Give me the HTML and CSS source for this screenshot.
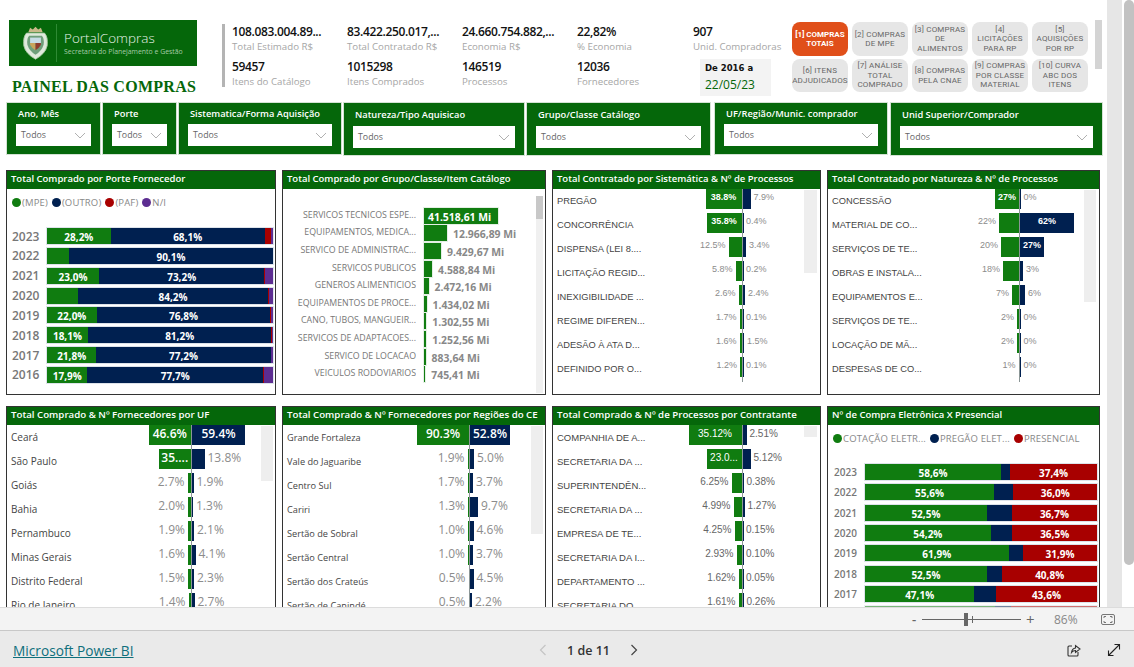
FILE: index.html
```html
<!DOCTYPE html>
<html lang="pt-BR">
<head>
<meta charset="utf-8">
<title>Painel das Compras</title>
<link rel="stylesheet" href="styles.css">
</head>
<body>
<div class="app">
<main class="main">
<div class="canvas">
  <header class="top">
    <div class="brand">
      <div class="logo">
        <svg class="crest" viewBox="0 0 30 38" width="27" height="36" aria-hidden="true">
          <path d="M7 7 L9 2 L12 4 L15 1 L18 4 L21 2 L23 7 Z" fill="#c9b98a"/>
          <path d="M5 8 H25 Q29 12 28 22 Q26 31 15 37 Q4 31 2 22 Q1 12 5 8 Z" fill="#dfe9dc" stroke="#a9c9a4"/>
          <path d="M8 11 H22 Q25 14 24 21 Q22 28 15 32 Q8 28 6 21 Q5 14 8 11 Z" fill="#6f9f7b"/>
          <rect x="9" y="13" width="12" height="6" fill="#c7dce6"/>
          <path d="M9 19 H15 V27 Q11 25 9 21 Z" fill="#c9a45c"/>
          <path d="M15 19 H21 V21 Q19 25 15 27 Z" fill="#8f3b2e"/>
        </svg>
        <div class="logo-text">
          <div class="logo-name">PortalCompras</div>
          <div class="logo-sub">Secretaria do Planejamento e Gestão</div>
        </div>
      </div>
      <h1 class="title">PAINEL DAS COMPRAS</h1>
    </div>
    <div class="kpis">
      <div class="kpi"><b>108.083.004.89...</b><span>Total Estimado R$</span></div>
      <div class="kpi"><b>83.422.250.017,...</b><span>Total Contratado R$</span></div>
      <div class="kpi"><b>24.660.754.882,...</b><span>Economia R$</span></div>
      <div class="kpi"><b>22,82%</b><span>% Economia</span></div>
      <div class="kpi"><b>907</b><span>Unid. Compradoras</span></div>
      <div class="kpi"><b>59457</b><span>Itens do Catálogo</span></div>
      <div class="kpi"><b>1015298</b><span>Itens Comprados</span></div>
      <div class="kpi"><b>146519</b><span>Processos</span></div>
      <div class="kpi"><b>12036</b><span>Fornecedores</span></div>
      <div class="date"><div class="date-a">De 2016 a</div><div class="date-b">22/05/23</div></div>
    </div>
    <nav class="btns">
      <a class="btn on">[1] COMPRAS TOTAIS</a>
      <a class="btn">[2] COMPRAS DE MPE</a>
      <a class="btn">[3] COMPRAS DE ALIMENTOS</a>
      <a class="btn">[4] LICITAÇÕES PARA RP</a>
      <a class="btn">[5] AQUISIÇÕES POR RP</a>
      <a class="btn">[6] ITENS ADJUDICADOS</a>
      <a class="btn">[7] ANÁLISE TOTAL COMPRADO</a>
      <a class="btn">[8] COMPRAS PELA CNAE</a>
      <a class="btn">[9] COMPRAS POR CLASSE MATERIAL</a>
      <a class="btn">[10] CURVA ABC DOS ITENS</a>
    </nav>
    <div class="btn-scroll"></div>
  </header>

  <section class="filters">
    <div class="slicer s-ano"><div class="s-label">Ano, Mês</div><div class="dd">Todos<svg class="chev" viewBox="0 0 12 7"><path d="M1 1 L6 6 L11 1"/></svg></div></div>
    <div class="slicer s-porte"><div class="s-label">Porte</div><div class="dd">Todos<svg class="chev" viewBox="0 0 12 7"><path d="M1 1 L6 6 L11 1"/></svg></div></div>
    <div class="slicer s-sis"><div class="s-label">Sistematica/Forma Aquisição</div><div class="dd">Todos<svg class="chev" viewBox="0 0 12 7"><path d="M1 1 L6 6 L11 1"/></svg></div></div>
    <div class="slicer tall s-nat"><div class="s-label">Natureza/Tipo Aquisicao</div><div class="dd">Todos<svg class="chev" viewBox="0 0 12 7"><path d="M1 1 L6 6 L11 1"/></svg></div></div>
    <div class="slicer tall s-gru"><div class="s-label">Grupo/Classe Catálogo</div><div class="dd">Todos<svg class="chev" viewBox="0 0 12 7"><path d="M1 1 L6 6 L11 1"/></svg></div></div>
    <div class="slicer s-uf"><div class="s-label">UF/Região/Munic. comprador</div><div class="dd">Todos<svg class="chev" viewBox="0 0 12 7"><path d="M1 1 L6 6 L11 1"/></svg></div></div>
    <div class="slicer tall s-uni"><div class="s-label">Unid Superior/Comprador</div><div class="dd">Todos<svg class="chev" viewBox="0 0 12 7"><path d="M1 1 L6 6 L11 1"/></svg></div></div>
  </section>

  <section class="grid">
    <!-- Row 1 -->
    <article class="panel">
      <h2 class="p-head">Total Comprado por Porte Fornecedor</h2>
      <div class="legend"><i class="dot g"></i>(MPE) <i class="dot n"></i>(OUTRO) <i class="dot r"></i>(PAF) <i class="dot p"></i>N/I</div>
      <div class="stack big">
        <div class="srow"><span class="yr">2023</span><div class="sbar"><div class="g" style="width:28.2%">28,2%</div><div class="n" style="width:68.1%">68,1%</div><div class="r" style="width:2.9%"></div><div class="p" style="width:.8%"></div></div></div>
        <div class="srow"><span class="yr">2022</span><div class="sbar"><div class="g" style="width:9.7%"></div><div class="n" style="width:90.3%">90,1%</div></div></div>
        <div class="srow"><span class="yr">2021</span><div class="sbar"><div class="g" style="width:23%">23,0%</div><div class="n" style="width:73.2%">73,2%</div><div class="r" style="width:.3%"></div><div class="p" style="width:3.5%"></div></div></div>
        <div class="srow"><span class="yr">2020</span><div class="sbar"><div class="g" style="width:13.7%"></div><div class="n" style="width:84.2%">84,2%</div><div class="r" style="width:.4%"></div><div class="p" style="width:1.7%"></div></div></div>
        <div class="srow"><span class="yr">2019</span><div class="sbar"><div class="g" style="width:22%">22,0%</div><div class="n" style="width:76.8%">76,8%</div><div class="r" style="width:.3%"></div><div class="p" style="width:.9%"></div></div></div>
        <div class="srow"><span class="yr">2018</span><div class="sbar"><div class="g" style="width:18.1%">18,1%</div><div class="n" style="width:81.2%">81,2%</div><div class="r" style="width:.4%"></div><div class="p" style="width:.3%"></div></div></div>
        <div class="srow"><span class="yr">2017</span><div class="sbar"><div class="g" style="width:21.8%">21,8%</div><div class="n" style="width:77.2%">77,2%</div><div class="r" style="width:.3%"></div><div class="p" style="width:.7%"></div></div></div>
        <div class="srow"><span class="yr">2016</span><div class="sbar"><div class="g" style="width:17.9%">17,9%</div><div class="n" style="width:77.7%">77,7%</div><div class="r" style="width:.4%"></div><div class="p" style="width:4%"></div></div></div>
      </div>
    </article>

    <article class="panel">
      <h2 class="p-head">Total Comprado por Grupo/Classe/Item Catálogo</h2>
      <div class="hbars">
        <div class="hrow"><span class="hl">SERVICOS TECNICOS ESPE...</span><span class="hb in" style="width:74px">41.518,61 Mi</span></div>
        <div class="hrow"><span class="hl">EQUIPAMENTOS, MEDICA...</span><span class="hb" style="width:23px"></span><span class="hv">12.966,89 Mi</span></div>
        <div class="hrow"><span class="hl">SERVICO DE ADMINISTRAC...</span><span class="hb" style="width:17px"></span><span class="hv">9.429,67 Mi</span></div>
        <div class="hrow"><span class="hl">SERVICOS PUBLICOS</span><span class="hb" style="width:8px"></span><span class="hv">4.588,84 Mi</span></div>
        <div class="hrow"><span class="hl">GENEROS ALIMENTICIOS</span><span class="hb" style="width:4.5px"></span><span class="hv">2.472,16 Mi</span></div>
        <div class="hrow"><span class="hl">EQUIPAMENTOS DE PROCE...</span><span class="hb" style="width:2.5px"></span><span class="hv">1.434,02 Mi</span></div>
        <div class="hrow"><span class="hl">CANO, TUBOS, MANGUEIR...</span><span class="hb" style="width:2.3px"></span><span class="hv">1.302,55 Mi</span></div>
        <div class="hrow"><span class="hl">SERVICOS DE ADAPTACOES...</span><span class="hb" style="width:2.2px"></span><span class="hv">1.252,56 Mi</span></div>
        <div class="hrow"><span class="hl">SERVICO DE LOCACAO</span><span class="hb" style="width:1.6px"></span><span class="hv">883,64 Mi</span></div>
        <div class="hrow"><span class="hl">VEICULOS RODOVIARIOS</span><span class="hb" style="width:1.3px"></span><span class="hv">745,41 Mi</span></div>
      </div>
      <div class="track t-gru"><div class="thumb"></div></div>
    </article>

    <article class="panel mirror m-sis arial">
      <h2 class="p-head">Total Contratado por Sistemática &amp; Nº de Processos</h2>
      <div class="mrow"><div class="ml"><span class="lb">PREGÃO</span><span class="b gb" style="width:36px">38.8%</span></div><div class="mr"><span class="b nb" style="width:8px"></span><span class="v">7.9%</span></div></div>
      <div class="mrow"><div class="ml"><span class="lb">CONCORRÊNCIA</span><span class="b gb" style="width:35px">35.8%</span></div><div class="mr"><span class="b nb" style="width:.5px"></span><span class="v">0.4%</span></div></div>
      <div class="mrow"><div class="ml"><span class="lb">DISPENSA (LEI 8....</span><span class="v">12.5%</span><span class="b gb" style="width:13px"></span></div><div class="mr"><span class="b nb" style="width:3.5px"></span><span class="v">3.4%</span></div></div>
      <div class="mrow"><div class="ml"><span class="lb">LICITAÇÃO REGID...</span><span class="v">5.8%</span><span class="b gb" style="width:6px"></span></div><div class="mr"><span class="b nb" style="width:.5px"></span><span class="v">0.2%</span></div></div>
      <div class="mrow"><div class="ml"><span class="lb">INEXIGIBILIDADE ...</span><span class="v">2.6%</span><span class="b gb" style="width:3px"></span></div><div class="mr"><span class="b nb" style="width:2.5px"></span><span class="v">2.4%</span></div></div>
      <div class="mrow"><div class="ml"><span class="lb">REGIME DIFEREN...</span><span class="v">1.7%</span><span class="b gb" style="width:2px"></span></div><div class="mr"><span class="b nb" style="width:.5px"></span><span class="v">0.1%</span></div></div>
      <div class="mrow"><div class="ml"><span class="lb">ADESÃO À ATA D...</span><span class="v">1.6%</span><span class="b gb" style="width:2px"></span></div><div class="mr"><span class="b nb" style="width:1.5px"></span><span class="v">1.5%</span></div></div>
      <div class="mrow"><div class="ml"><span class="lb">DEFINIDO POR O...</span><span class="v">1.2%</span><span class="b gb" style="width:1.5px"></span></div><div class="mr"><span class="b nb" style="width:.5px"></span><span class="v">0.1%</span></div></div>
      <div class="track t-sis"></div>
    </article>

    <article class="panel mirror m-nat arial">
      <h2 class="p-head">Total Contratado por Natureza &amp; Nº de Processos</h2>
      <div class="mrow"><div class="ml"><span class="lb">CONCESSÃO</span><span class="b gb" style="width:24px">27%</span></div><div class="mr"><span class="b nb" style="width:.5px"></span><span class="v">0%</span></div></div>
      <div class="mrow"><div class="ml"><span class="lb">MATERIAL DE CO...</span><span class="v">22%</span><span class="b gb" style="width:20px"></span></div><div class="mr"><span class="b nb" style="width:54px">62%</span></div></div>
      <div class="mrow"><div class="ml"><span class="lb">SERVIÇOS DE TE...</span><span class="v">20%</span><span class="b gb" style="width:18px"></span></div><div class="mr"><span class="b nb" style="width:24px">27%</span></div></div>
      <div class="mrow"><div class="ml"><span class="lb">OBRAS E INSTALA...</span><span class="v">18%</span><span class="b gb" style="width:16px"></span></div><div class="mr"><span class="b nb" style="width:3px"></span><span class="v">3%</span></div></div>
      <div class="mrow"><div class="ml"><span class="lb">EQUIPAMENTOS E...</span><span class="v">7%</span><span class="b gb" style="width:7px"></span></div><div class="mr"><span class="b nb" style="width:5px"></span><span class="v">6%</span></div></div>
      <div class="mrow"><div class="ml"><span class="lb">SERVIÇOS DE TE...</span><span class="v">2%</span><span class="b gb" style="width:2px"></span></div><div class="mr"><span class="b nb" style="width:.5px"></span><span class="v">0%</span></div></div>
      <div class="mrow"><div class="ml"><span class="lb">LOCAÇÃO DE MÃ...</span><span class="v">2%</span><span class="b gb" style="width:2px"></span></div><div class="mr"><span class="b nb" style="width:.5px"></span><span class="v">0%</span></div></div>
      <div class="mrow"><div class="ml"><span class="lb">DESPESAS DE CO...</span><span class="v">1%</span><span class="b gb" style="width:.5px"></span></div><div class="mr"><span class="b nb" style="width:.5px"></span><span class="v">0%</span></div></div>
      <div class="track t-nat"></div>
    </article>

    <!-- Row 2 -->
    <article class="panel mirror m-uf large">
      <h2 class="p-head">Total Comprado &amp; Nº Fornecedores por UF</h2>
      <div class="mrow"><div class="ml"><span class="lb">Ceará</span><span class="b gb" style="width:42.5px">46.6%</span></div><div class="mr"><span class="b nb" style="width:53px">59.4%</span></div></div>
      <div class="mrow"><div class="ml"><span class="lb">São Paulo</span><span class="b gb" style="width:32.5px">35....</span></div><div class="mr"><span class="b nb" style="width:12.5px"></span><span class="v">13.8%</span></div></div>
      <div class="mrow"><div class="ml"><span class="lb">Goiás</span><span class="v">2.7%</span><span class="b gb" style="width:3.5px"></span></div><div class="mr"><span class="b nb" style="width:1.5px"></span><span class="v">1.9%</span></div></div>
      <div class="mrow"><div class="ml"><span class="lb">Bahia</span><span class="v">2.0%</span><span class="b gb" style="width:3px"></span></div><div class="mr"><span class="b nb" style="width:1px"></span><span class="v">1.3%</span></div></div>
      <div class="mrow"><div class="ml"><span class="lb">Pernambuco</span><span class="v">1.9%</span><span class="b gb" style="width:3px"></span></div><div class="mr"><span class="b nb" style="width:2px"></span><span class="v">2.1%</span></div></div>
      <div class="mrow"><div class="ml"><span class="lb">Minas Gerais</span><span class="v">1.6%</span><span class="b gb" style="width:3px"></span></div><div class="mr"><span class="b nb" style="width:3.5px"></span><span class="v">4.1%</span></div></div>
      <div class="mrow"><div class="ml"><span class="lb">Distrito Federal</span><span class="v">1.5%</span><span class="b gb" style="width:3px"></span></div><div class="mr"><span class="b nb" style="width:2px"></span><span class="v">2.3%</span></div></div>
      <div class="mrow"><div class="ml"><span class="lb">Rio de Janeiro</span><span class="v">1.4%</span><span class="b gb" style="width:2.5px"></span></div><div class="mr"><span class="b nb" style="width:2.5px"></span><span class="v">2.7%</span></div></div>
      <div class="track t-uf"></div>
    </article>

    <article class="panel mirror m-reg large">
      <h2 class="p-head">Total Comprado &amp; Nº Fornecedores por Regiões do CE</h2>
      <div class="mrow"><div class="ml"><span class="lb">Grande Fortaleza</span><span class="b gb" style="width:52px">90.3%</span></div><div class="mr"><span class="b nb" style="width:40px">52.8%</span></div></div>
      <div class="mrow"><div class="ml"><span class="lb">Vale do Jaguaribe</span><span class="v">1.9%</span><span class="b gb" style="width:1.5px"></span></div><div class="mr"><span class="b nb" style="width:4px"></span><span class="v">5.0%</span></div></div>
      <div class="mrow"><div class="ml"><span class="lb">Centro Sul</span><span class="v">1.7%</span><span class="b gb" style="width:1.5px"></span></div><div class="mr"><span class="b nb" style="width:3px"></span><span class="v">3.7%</span></div></div>
      <div class="mrow"><div class="ml"><span class="lb">Cariri</span><span class="v">1.3%</span><span class="b gb" style="width:1px"></span></div><div class="mr"><span class="b nb" style="width:8px"></span><span class="v">9.7%</span></div></div>
      <div class="mrow"><div class="ml"><span class="lb">Sertão de Sobral</span><span class="v">1.0%</span><span class="b gb" style="width:1px"></span></div><div class="mr"><span class="b nb" style="width:3.5px"></span><span class="v">4.6%</span></div></div>
      <div class="mrow"><div class="ml"><span class="lb">Sertão Central</span><span class="v">1.0%</span><span class="b gb" style="width:1px"></span></div><div class="mr"><span class="b nb" style="width:3px"></span><span class="v">3.7%</span></div></div>
      <div class="mrow"><div class="ml"><span class="lb">Sertão dos Crateús</span><span class="v">0.5%</span><span class="b gb" style="width:.5px"></span></div><div class="mr"><span class="b nb" style="width:3.5px"></span><span class="v">4.5%</span></div></div>
      <div class="mrow"><div class="ml"><span class="lb">Sertão de Canindé</span><span class="v">0.5%</span><span class="b gb" style="width:.5px"></span></div><div class="mr"><span class="b nb" style="width:2px"></span><span class="v">2.2%</span></div></div>
      <div class="track t-reg"></div>
    </article>

    <article class="panel mirror m-con arial mid">
      <h2 class="p-head">Total Comprado &amp; Nº de Processos por Contratante</h2>
      <div class="mrow"><div class="ml"><span class="lb">COMPANHIA DE A...</span><span class="b gb" style="width:53px">35.12%</span></div><div class="mr"><span class="b nb" style="width:4px"></span><span class="v">2.51%</span></div></div>
      <div class="mrow"><div class="ml"><span class="lb">SECRETARIA DA ...</span><span class="b gb" style="width:35px">23.0...</span></div><div class="mr"><span class="b nb" style="width:8px"></span><span class="v">5.12%</span></div></div>
      <div class="mrow"><div class="ml"><span class="lb">SUPERINTENDÊN...</span><span class="v">6.25%</span><span class="b gb" style="width:10px"></span></div><div class="mr"><span class="b nb" style="width:1px"></span><span class="v">0.38%</span></div></div>
      <div class="mrow"><div class="ml"><span class="lb">SECRETARIA DA ...</span><span class="v">4.99%</span><span class="b gb" style="width:8px"></span></div><div class="mr"><span class="b nb" style="width:2px"></span><span class="v">1.27%</span></div></div>
      <div class="mrow"><div class="ml"><span class="lb">EMPRESA DE TE...</span><span class="v">4.25%</span><span class="b gb" style="width:7px"></span></div><div class="mr"><span class="b nb" style="width:.5px"></span><span class="v">0.15%</span></div></div>
      <div class="mrow"><div class="ml"><span class="lb">SECRETARIA DA I...</span><span class="v">2.93%</span><span class="b gb" style="width:5px"></span></div><div class="mr"><span class="b nb" style="width:.5px"></span><span class="v">0.10%</span></div></div>
      <div class="mrow"><div class="ml"><span class="lb">DEPARTAMENTO ...</span><span class="v">1.62%</span><span class="b gb" style="width:3px"></span></div><div class="mr"><span class="b nb" style="width:.5px"></span><span class="v">0.05%</span></div></div>
      <div class="mrow"><div class="ml"><span class="lb">SECRETARIA DO ...</span><span class="v">1.61%</span><span class="b gb" style="width:3px"></span></div><div class="mr"><span class="b nb" style="width:1px"></span><span class="v">0.26%</span></div></div>
      <div class="track t-con"></div>
    </article>

    <article class="panel">
      <h2 class="p-head">Nº de Compra Eletrônica X Presencial</h2>
      <div class="legend l2"><i class="dot g"></i>COTAÇÃO ELETR... <i class="dot n"></i>PREGÃO ELET... <i class="dot r"></i>PRESENCIAL</div>
      <div class="stack small">
        <div class="srow"><span class="yr">2023</span><div class="sbar"><div class="g" style="width:58.6%">58,6%</div><div class="n" style="width:4%"></div><div class="r" style="width:37.4%">37,4%</div></div></div>
        <div class="srow"><span class="yr">2022</span><div class="sbar"><div class="g" style="width:55.6%">55,6%</div><div class="n" style="width:8.4%"></div><div class="r" style="width:36%">36,0%</div></div></div>
        <div class="srow"><span class="yr">2021</span><div class="sbar"><div class="g" style="width:52.5%">52,5%</div><div class="n" style="width:10.8%"></div><div class="r" style="width:36.7%">36,7%</div></div></div>
        <div class="srow"><span class="yr">2020</span><div class="sbar"><div class="g" style="width:54.2%">54,2%</div><div class="n" style="width:9.3%"></div><div class="r" style="width:36.5%">36,5%</div></div></div>
        <div class="srow"><span class="yr">2019</span><div class="sbar"><div class="g" style="width:61.9%">61,9%</div><div class="n" style="width:6.2%"></div><div class="r" style="width:31.9%">31,9%</div></div></div>
        <div class="srow"><span class="yr">2018</span><div class="sbar"><div class="g" style="width:52.5%">52,5%</div><div class="n" style="width:6.7%"></div><div class="r" style="width:40.8%">40,8%</div></div></div>
        <div class="srow"><span class="yr">2017</span><div class="sbar"><div class="g" style="width:47.1%">47,1%</div><div class="n" style="width:9.3%"></div><div class="r" style="width:43.6%">43,6%</div></div></div>
        <div class="srow faded"><span class="yr">2016</span><div class="sbar"><div class="g" style="width:56%"></div><div class="n" style="width:7%"></div><div class="r" style="width:37%"></div></div></div>
      </div>
    </article>
  </section>
</div>
<aside class="rail"><div class="band"></div><div class="page-scroll"></div></aside>
</main>

<div class="zoombar">
  <span class="z-sign">-</span>
  <div class="slider"><span class="s-thumb"></span><span class="s-tick"></span></div>
  <span class="z-sign plus">+</span>
  <span class="z-pct">86%</span>
  <svg class="z-fit" viewBox="0 0 14 11" width="14" height="11"><rect x=".5" y=".5" width="13" height="10" rx="1.5" fill="none" stroke="#777"/><path d="M3 4 V2.5 H5 M9 2.5 H11 V4 M11 7 V8.5 H9 M5 8.5 H3 V7" fill="none" stroke="#777"/></svg>
</div>

<footer class="footer">
  <a class="pbi">Microsoft Power BI</a>
  <div class="pager">
    <svg class="pg" viewBox="0 0 8 12" width="8" height="12"><path d="M6.5 1 L1.5 6 L6.5 11" fill="none" stroke="#c4c4c4" stroke-width="1.2"/></svg>
    <span class="pg-text">1 de 11</span>
    <svg class="pg" viewBox="0 0 8 12" width="8" height="12"><path d="M1.5 1 L6.5 6 L1.5 11" fill="none" stroke="#444" stroke-width="1.2"/></svg>
  </div>
  <div class="actions">
    <svg viewBox="0 0 14 14" width="14" height="14"><path d="M5 3 H2 Q1 3 1 4 V12 Q1 13 2 13 H10 Q11 13 11 12 V9" fill="none" stroke="#333" stroke-width="1.1"/><path d="M4.5 9.5 Q5 5.5 8.5 5 V2.5 L13 6 L8.5 9.5 V7.5 Q6 7.5 4.5 9.5 Z" fill="none" stroke="#333" stroke-width="1.1"/></svg>
    <svg viewBox="0 0 14 14" width="14" height="14"><path d="M1.5 12.5 L12.5 1.5 M7.5 1.5 H12.5 V6.5 M1.5 7.5 V12.5 H6.5" fill="none" stroke="#222" stroke-width="1.1"/></svg>
  </div>
</footer>
</div>
</body>
</html>
```

FILE: styles.css
```css
* { box-sizing: border-box; }
html, body { margin: 0; padding: 0; height: 100%; overflow: hidden; background: #fff; }
body { font-family: "Open Sans", "Noto Sans", sans-serif; color: #333; }
h1, h2 { margin: 0; font-weight: inherit; }
.app { width: 1134px; height: 667px; display: flex; flex-direction: column; }
.main { height: 607px; display: flex; overflow: hidden; }
.canvas { width: 1107px; padding-top: 20px; flex: none; }

/* header */
.top { display: flex; height: 82px; position: relative; }
.brand { width: 188px; margin-left: 9px; flex: none; }
.logo { height: 46px; background: #05670a; display: flex; align-items: center; padding-left: 13px; }
.crest { flex: none; }
.logo-text { margin-left: 7px; border-left: 1px solid #2f8a34; padding-left: 7px; height: 38px; display: flex; flex-direction: column; justify-content: center; color: #fff; }
.logo-name { font-weight: 300; font-size: 13.5px; line-height: 18px; color: #e8f2e8; white-space: nowrap; }
.logo-sub { font-size: 6.9px; line-height: 10px; color: #a5cba7; white-space: nowrap; }
.title { margin: 13px 0 0 3px; font-family: "Liberation Serif", serif; font-weight: 700; font-size: 16px; line-height: 16px; color: #05670a; white-space: nowrap; letter-spacing: .27px; }

.kpis { margin: 4px 0 0 25px; height: 63px; width: 549px; border-left: 3px solid #b4b4b4; padding-left: 7px; display: grid; grid-template-columns: 115px 115px 115px 116px 1fr; grid-template-rows: 35px 28px; flex: none; }
.kpi { display: flex; flex-direction: column; }
.kpi b { font-size: 12px; line-height: 16px; font-weight: 600; color: #111; white-space: nowrap; letter-spacing: -.35px; }
.kpi span { font-size: 9.7px; line-height: 14px; color: #a6a6a6; white-space: nowrap; }
.date { margin: 0 0 0 7px; height: 37px; width: 71px; background: #f3f3f3; padding: 2px 0 0 5px; }
.date-a { font-family: "DejaVu Sans", sans-serif; font-size: 8.5px; font-weight: 700; line-height: 14px; color: #111; white-space: nowrap; }
.date-b { font-size: 12px; line-height: 19px; color: #05670a; white-space: nowrap; }

.btns { margin: 2px 0 0 21px; width: 296px; display: grid; grid-template-columns: repeat(5, 56px); grid-template-rows: 34px 33px; gap: 3px 4px; flex: none; }
.btn { background: #e6e6e6; border-radius: 8px; display: flex; align-items: center; justify-content: center; text-align: center; font-family: "Roboto", sans-serif; font-size: 8px; line-height: 9.5px; letter-spacing: .2px; color: #666; padding: 0 1px; }
.btn.on { background: #e04f1a; color: #fff; font-weight: 700; letter-spacing: 0; }
.btn-scroll { margin-left: 7px; width: 7px; height: 49px; background: #d4d4d4; flex: none; }

/* filters */
.filters { display: flex; margin: 0 0 0 6px; gap: 1px; height: 54px; align-items: flex-start; }
.slicer { background: #05670a; height: 53px; padding: 2px 9px 0; border: 1px solid #d4e2d4; flex: none; }
.slicer.tall { height: 54px; }
.s-label { color: #fff; font-size: 9.3px; font-weight: 600; line-height: 18px; margin-bottom: 1px; padding-left: 2px; white-space: nowrap; }
.tall .s-label { line-height: 20px; }
.dd { background: #fff; height: 22px; display: flex; align-items: center; justify-content: space-between; padding: 0 5px; font-size: 8.8px; color: #666; }
.chev { width: 12px; height: 7px; }
.chev path { fill: none; stroke: #b0b0b0; stroke-width: 1; }
.s-ano { width: 95px; }
.s-porte { width: 75px; }
.s-sis { width: 164px; }
.s-nat { width: 182px; }
.s-gru { width: 185px; }
.s-uf { width: 174px; margin-left: 2px; }
.s-uni { width: 213px; margin-left: 1px; }

/* grid */
.grid { margin: 14px 0 0 6px; display: grid; grid-template-columns: 270px 264px 269px 273px; grid-template-rows: 225px 240px; gap: 11px 6px; }
.panel { border: 1px solid #333; background: #fff; position: relative; overflow: hidden; }
.p-head { background: #05670a; color: #fff; height: 18px; font-size: 9.5px; font-weight: 600; line-height: 16px; padding-left: 4px; white-space: nowrap; }
.large .p-head, .mid .p-head { font-size: 9.7px; }

.legend { height: 25px; padding: 1px 0 0 5px; font-size: 9.5px; color: #888; display: flex; align-items: center; white-space: nowrap; letter-spacing: .15px; }
.legend.l2 { padding-left: 5px; height: 25px; }
.dot { width: 9px; height: 9px; border-radius: 50%; display: inline-block; margin: 0 1px 0 0; }
.legend .dot:not(:first-child) { margin-left: 4px; }
.dot.g, .sbar .g { background: #107c10; }
.dot.n, .sbar .n { background: #002050; }
.dot.r, .sbar .r { background: #a80000; }
.dot.p, .sbar .p { background: #5c2d91; }

.stack { display: flex; flex-direction: column; }
.stack.big { margin-top: 14px; gap: 3.85px; }
.stack.small { margin-top: 14px; gap: 4.35px; }
.srow { display: flex; align-items: center; height: 16px; }
.yr { color: #777; font-weight: 600; white-space: nowrap; }
.big .yr { width: 40px; padding-left: 5px; font-size: 12px; }
.small .yr { width: 37px; padding-left: 6px; font-size: 10px; }
.sbar { display: flex; height: 16px; width: 226px; box-shadow: 0 0 0 1px #dde3ea; }
.small .sbar { width: 232px; }
.sbar > div { height: 100%; color: #fff; font-size: 10px; font-weight: 700; line-height: 18px; text-align: center; white-space: nowrap; overflow: hidden; }
.faded { opacity: .55; }

/* horizontal bars */
.hbars { padding-top: 18px; }
.hrow { display: flex; align-items: center; height: 17.6px; }
.hl { width: 133px; text-align: right; font-size: 8.8px; color: #777; white-space: nowrap; flex: none; margin-top: -2px; overflow: hidden; }
.hb { height: 16px; background: #107c10; margin-left: 8px; flex: none; box-shadow: 0 0 0 1px #e4efe4; }
.hb.in { color: #fff; font-size: 10.4px; font-weight: 700; line-height: 19px; padding-left: 4px; white-space: nowrap; }
.hv { margin: 2px 0 0 6px; font-size: 10.4px; font-weight: 700; color: #888; white-space: nowrap; }

.track { position: absolute; background: #eee; }
.t-gru { left: 253px; top: 25px; width: 7px; height: 197px; background: #f0f0f0; }
.thumb { height: 23px; background: #c8c8c8; }
.t-sis { left: 251px; top: 19px; width: 13px; height: 83px; }
.t-nat { left: 256px; top: 19px; width: 12px; height: 112px; }
.t-uf { left: 254px; top: 19px; width: 12px; height: 55px; }
.t-reg { left: 248px; top: 19px; width: 12px; height: 108px; }
.t-con { left: 251px; top: 19px; width: 13px; height: 11px; }

/* mirror */
.mrow { display: grid; height: 24px; }
.m-sis .mrow { grid-template-columns: 188.5px 1fr; }
.m-nat .mrow { grid-template-columns: 191px 1fr; }
.m-uf .mrow { grid-template-columns: 184px 1fr; }
.m-reg .mrow { grid-template-columns: 186px 1fr; }
.m-con .mrow { grid-template-columns: 188.5px 1fr; }
.ml { display: flex; align-items: flex-start; min-width: 0; }
.mr { display: flex; align-items: flex-start; border-left: 1px solid #8b9696; }
.lb { flex: 1; min-width: 0; padding-left: 4px; font-size: 9.3px; line-height: 25px; color: #444; white-space: nowrap; overflow: hidden; }
.v { font-size: 9px; line-height: 17px; color: #8c8c8c; padding: 0 3px; white-space: nowrap; }
.b { display: block; height: 20px; flex: none; color: #fff; font-size: 9px; font-weight: 700; text-align: center; line-height: 17px; white-space: nowrap; overflow: hidden; }
.gb { background: #107c10; }
.nb { background: #002050; }
.arial .lb, .arial .v, .arial .b { font-family: "Liberation Sans", sans-serif; }
.large .v { font-size: 12px; padding: 0 3px; line-height: 18px; }
.large .b { font-size: 12px; font-weight: 600; line-height: 18px; }
.large .lb { font-size: 9.2px; padding-left: 4px; }
.m-uf .lb { font-size: 10px; }
.mid .v, .mid .b { font-size: 10px; line-height: 18px; }
.mid .b { font-weight: 400; }
.mid .lb { font-size: 9.5px; }
.mid .v { color: #666; }

/* rail */
.rail { flex: 1; display: flex; position: relative; }
.band { width: 15px; background: #e6e6e6; }
.page-scroll { width: 10px; height: 565px; margin-left: 2px; background: #c2c2c2; border-radius: 5px; }

/* zoom bar */
.zoombar { height: 23px; background: #f3f3f3; border-top: 1px solid #dcdcdc; display: flex; align-items: center; padding-left: 912px; color: #666; }
.z-sign { font-size: 13px; font-weight: 600; width: 10px; line-height: 20px; }
.slider { width: 99px; height: 1px; background: #666; position: relative; }
.s-thumb { position: absolute; left: 42px; top: -6px; width: 4px; height: 13px; background: #666; }
.s-tick { position: absolute; left: 50px; top: -3px; width: 1px; height: 7px; background: #666; }
.plus { margin-left: 5px; width: 28px; font-weight: 400; font-size: 15px; }
.z-pct { font-size: 12px; color: #888; width: 47px; }

/* footer */
.footer { height: 37px; background: #eaeaea; border-top: 1px solid #c8c8c8; padding-top: 2px; display: grid; grid-template-columns: 539px 120px 1fr; align-items: center; }
.pbi { margin-left: 13px; font-size: 13.7px; color: #0e6f7c; text-decoration: underline; white-space: nowrap; }
.pager { display: flex; align-items: center; }
.pg-text { font-size: 12.5px; font-weight: 600; color: #333; margin: 0 20px; white-space: nowrap; }
.actions { display: flex; gap: 26px; justify-content: flex-end; padding-right: 13px; }
```
